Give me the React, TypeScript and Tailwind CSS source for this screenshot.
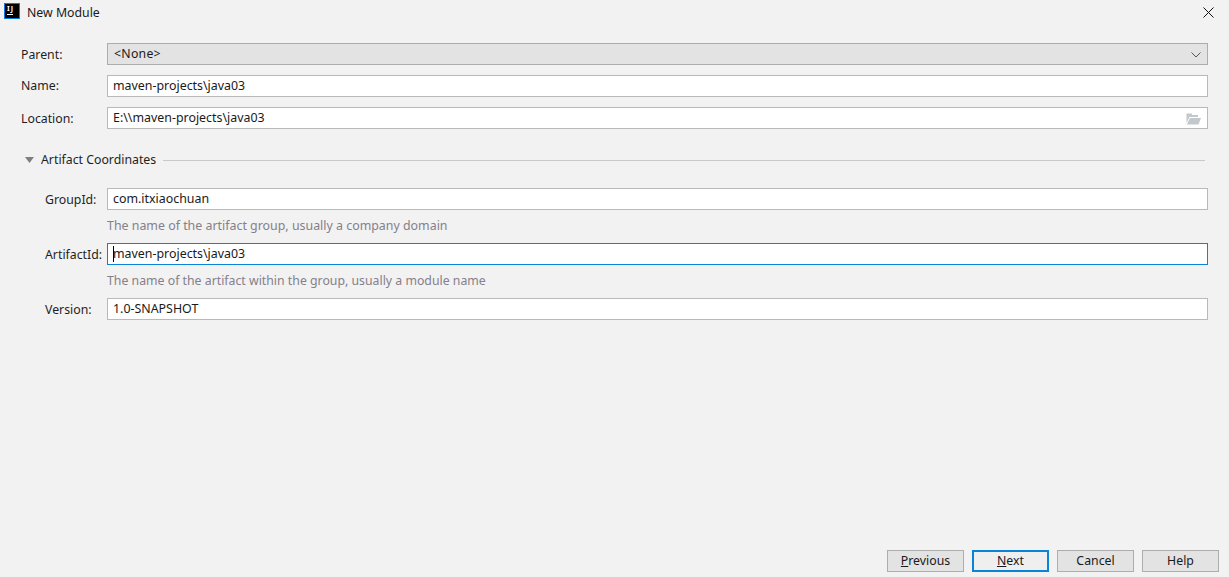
const font = 'font-["Noto_Sans",sans-serif]'

function Field({ value, focused, caret, folder, lower = true }: { value: string; focused?: boolean; caret?: boolean; folder?: boolean; lower?: boolean }) {
  return (
    <div className={`flex-1 h-[22px] flex items-center justify-between pl-[5px] pr-[6px] bg-white border ${lower ? 'pt-px' : ''} ${focused ? 'border-[#0a84d6]' : 'border-[#b9b9b9]'}`}>
      <span className="relative text-[12.4px] leading-none text-[#1a1a1a] whitespace-pre">
        {caret && <span className="absolute left-0 top-[-2px] w-px h-[16px] bg-black" />}
        {value}
      </span>
      {folder && (
        <svg width="15" height="12" viewBox="0 0 15 12">
          <path d="M0.5 0.5H5.5L6.5 2H12V4H3.5L0.5 10Z" fill="#c3c8cc" />
          <path d="M4 5H15L12.5 11.5H0.8Z" fill="#c3c8cc" />
        </svg>
      )}
    </div>
  )
}

function Row({ label, labelWidth, lower = true, children }: { label: string; labelWidth: string; lower?: boolean; children: React.ReactNode }) {
  return (
    <div className="flex items-center">
      <label className={`${labelWidth} ${lower ? 'pt-[2px]' : ''} shrink-0 text-[12.3px] leading-none text-[#1f1f1f]`}>{label}</label>
      {children}
    </div>
  )
}

function Btn({ children, primary }: { children: React.ReactNode; primary?: boolean }) {
  return (
    <button className={`w-[77px] h-[22px] flex items-center justify-center text-[12.3px] leading-none text-[#1a1a1a] bg-[#e3e3e3] ${primary ? 'border-2 border-[#0a84d6] bg-[#efefef]' : 'border border-[#adadad]'}`}>
      {children}
    </button>
  )
}

export default function App() {
  return (
    <div className={`${font} w-[1229px] h-[577px] bg-[#f2f2f2] flex flex-col overflow-hidden`}>
      <div className="h-[25px] flex items-center justify-between pl-[4px] pr-[15px] shrink-0">
        <div className="flex items-center gap-[7px]">
          <div className="w-4 h-4 -mt-[2px] bg-black border border-[#0a78e0] flex flex-col items-start pl-[2px] pt-[1px] overflow-hidden">
            <span className="text-[7px] tracking-[1px] leading-[7px] font-bold text-white">IJ</span>
            <span className="w-[6px] h-px bg-white mt-[2px]" />
          </div>
          <span className="pt-[2px] text-[12.3px] leading-none text-[#1a1a1a]">New Module</span>
        </div>
        <svg width="11" height="11" viewBox="0 0 11 11" stroke="#111" strokeWidth="1" fill="none">
          <path d="M0.5 0.5L10.5 10.5M10.5 0.5L0.5 10.5" />
        </svg>
      </div>

      <div className="pl-[21px] pr-[21px] pt-[18px] flex flex-col flex-1">
        <div className="flex flex-col gap-[10px]">
          <Row label="Parent:" labelWidth="w-[86px]">
            <div className="flex-1 h-[22px] flex items-center justify-between pl-[6px] pr-[6px] pt-px bg-[#e3e3e3] border border-[#adadad]">
              <span className="text-[12.3px] tracking-[0.25px] leading-none text-[#1a1a1a]">&lt;None&gt;</span>
              <svg width="10" height="6" viewBox="0 0 10 6" fill="none" stroke="#555" strokeWidth="1">
                <path d="M0.5 0.5L5 5L9.5 0.5" />
              </svg>
            </div>
          </Row>
          <Row label="Name:" labelWidth="w-[86px]" lower={false}>
            <Field value="maven-projects\java03" lower={false} />
          </Row>
          <Row label="Location:" labelWidth="w-[86px]">
            <Field value="E:\\maven-projects\java03" folder />
          </Row>
        </div>

        <div className="flex items-center mt-[24px] h-[14px] pl-[4px] pr-[3px]">
          <svg width="9" height="6" viewBox="0 0 9 6" className="mr-[7px]">
            <path d="M0 0H9L4.5 6Z" fill="#7f7f7f" />
          </svg>
          <span className="text-[12.3px] leading-none text-[#1f1f1f]">Artifact Coordinates</span>
          <div className="flex-1 h-px bg-[#c9c9c9] ml-[7px]" />
        </div>

        <div className="pl-[24px] mt-[21px] flex flex-col">
          <Row label="GroupId:" labelWidth="w-[62px]">
            <Field value="com.itxiaochuan" />
          </Row>
          <p className="ml-[62px] mt-[8px] h-[25px] text-[12.4px] leading-[15px] text-[#85808a]">The name of the artifact group, usually a company domain</p>
          <Row label="ArtifactId:" labelWidth="w-[62px]">
            <Field value="maven-projects\java03" focused caret />
          </Row>
          <p className="ml-[62px] mt-[8px] h-[25px] text-[12.3px] leading-[15px] text-[#85808a]">The name of the artifact within the group, usually a module name</p>
          <Row label="Version:" labelWidth="w-[62px]">
            <Field value="1.0-SNAPSHOT" />
          </Row>
        </div>

        <div className="mt-auto mb-[5px] -mr-[11px] flex justify-end gap-2">
          <Btn><span><u>P</u>revious</span></Btn>
          <Btn primary><span><u>N</u>ext</span></Btn>
          <Btn>Cancel</Btn>
          <Btn>Help</Btn>
        </div>
      </div>
    </div>
  )
}
